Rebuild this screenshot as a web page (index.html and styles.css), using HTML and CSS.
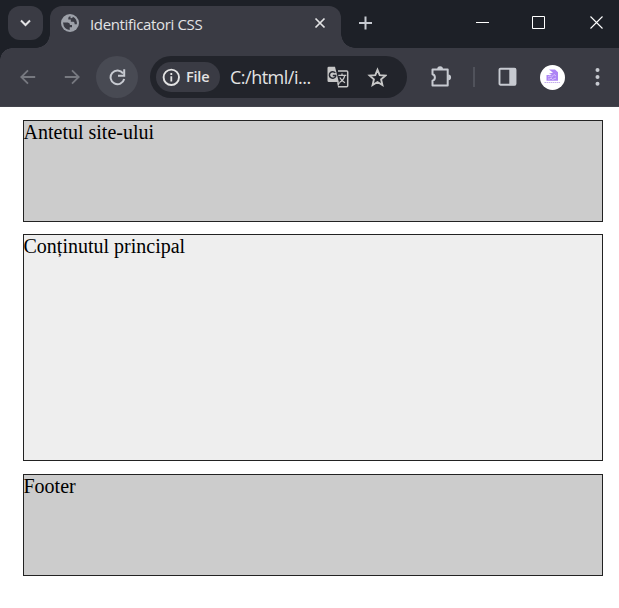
FILE: index.html
```
<!DOCTYPE html>
<html lang="ro">
<head>
<meta charset="utf-8">
<title>Identificatori CSS</title>
<link rel="stylesheet" href="styles.css">
</head>
<body>
<div class="tabstrip">
  <div class="tab-search"><svg width="35" height="34" viewBox="0 0 35 34"><path d="M13 14.500l4.500 4.500 4.500-4.500" fill="none" stroke="#e3e3e5" stroke-width="2"/></svg></div>
  <div class="tab">
    <svg class="globe" width="20" height="20" viewBox="0 0 20 20"><circle cx="10" cy="10" r="9" fill="#9da1a9"/><path d="M3 9.500h4.700q2.300.2 2.300 2.600h2v2.200H9.700v2.700Q3.700 16.500 3 9.500zM10.500 3.200q-2.200 0-2.200 1.800v1.600h2.500v2.200h2.700q1.200.1 1.200 2.400h2.200Q17.200 6 12.900 3.700q0 1.600-2.400 1.600z" fill="#3a3b44"/></svg>
    <span class="tab-title">Identificatori CSS</span>
    <svg class="tab-close" width="12" height="12" viewBox="0 0 12 12"><path d="M1.500 1.500l9 9m0-9l-9 9" stroke="#e3e3e5" stroke-width="1.700"/></svg>
  </div>
  <svg class="new-tab" width="14" height="14" viewBox="0 0 14 14"><path d="M7.500 .5v13M1 7h13" stroke="#c7cad1" stroke-width="2"/></svg>
  <div class="window-controls">
    <svg width="13" height="13" viewBox="0 0 13 13"><path d="M0 6.500h13" stroke="#fff"/></svg>
    <svg width="13" height="13" viewBox="0 0 13 13"><path d="M.5.5h12v12H.5z" fill="none" stroke="#fff"/></svg>
    <svg width="13" height="13" viewBox="0 0 13 13"><path d="M.5.5l12 12m0-12l-12 12" stroke="#fff" stroke-width="1.100"/></svg>
  </div>
</div>
<div class="toolbar">
  <svg class="back" width="16" height="16" viewBox="0 0 16 16"><path d="M15.200 8H2M8 1.300L1.300 8 8 14.700" fill="none" stroke="#777980" stroke-width="1.800"/></svg>
  <svg class="forward" width="16" height="16" viewBox="0 0 16 16"><path d="M.8 8H14M8 1.300L14.700 8 8 14.700" fill="none" stroke="#777980" stroke-width="1.800"/></svg>
  <div class="reload"><svg width="18" height="18" viewBox="0 0 18 18"><path d="M15.100 5.300A6.900 6.900 0 1 0 16.200 11" fill="none" stroke="#c7cad1" stroke-width="2"/><path d="M16.200 1.200v6.500H10" fill="none" stroke="#c7cad1" stroke-width="2"/></svg></div>
  <div class="omnibox">
    <div class="chip">
      <svg width="18" height="18" viewBox="0 0 18 18"><circle cx="9.300" cy="9.300" r="7.700" fill="none" stroke="#e3e3e3" stroke-width="1.900"/><path d="M9.300 8.300v5.200M9.300 5.100v1.800" stroke="#e3e3e3" stroke-width="1.800"/></svg>
      <span>File</span>
    </div>
    <span class="url">C:/html/i...</span>
    <svg class="translate" width="22" height="22" viewBox="0 0 22 22"><path d="M11 5h8.700q1 0 1 1v13.700q0 1-1 1H11" fill="none" stroke="#c7c7c7" stroke-width="1.500"/><path d="M1.800.8H8l3.800 15.300H1.800q-1.300 0-1.300-1.300V2.100Q.5.800 1.800.8zM10 16.200h3.200L11 20.700z" fill="#c7c7c7"/><path d="M8.300 6.900a3.300 3.300 0 1 0 .4 3.400V9.400H5.800" fill="none" stroke="#282a32" stroke-width="1.500"/><path d="M11.300 9.300h8M15 7.500v1.800M17.800 9.300q-1 4.500-5 7M12.800 11.500q1.700 3.300 5.200 5.300" fill="none" stroke="#c7c7c7" stroke-width="1.300"/></svg>
    <svg class="star" width="20" height="20" viewBox="0 0 20 20"><path d="M10.500 2.800l2.200 5.300 5.700.5-4.300 3.800 1.300 5.600-4.900-3-4.900 3 1.300-5.600-4.300-3.800 5.700-.5z" fill="none" stroke="#c7c7c7" stroke-width="1.900"/></svg>
  </div>
  <svg class="extensions" width="22" height="22" viewBox="0 0 22 22"><path d="M2.500 3.500H17.700v15.900H2.500v-4.700a3.400 3.400 0 0 0 0-6.500z" fill="none" stroke="#c7cad1" stroke-width="2" stroke-linejoin="round"/><path d="M7.200 3.200a2.900 2.900 0 0 1 5.800 0zM18.200 8.400a2.900 2.900 0 0 1 0 5.800z" fill="#c7cad1"/></svg>
  <div class="divider"></div>
  <svg class="side-panel" width="19" height="19" viewBox="0 0 19 19"><rect x="1.500" y="1.700" width="16" height="16" rx="1" fill="none" stroke="#c7cad1" stroke-width="1.900"/><path d="M11.300 1.200h6.200v17h-6.200z" fill="#c7cad1"/></svg>
  <svg class="avatar" width="25" height="25" viewBox="0 0 25 25"><circle cx="12.500" cy="12.500" r="12.500" fill="#fff"/><path d="M9 4.500h6l3 2.700v8.500H6.500V10H12l-3-1.500 4-.8z" fill="#ad85f5"/><path d="M8 12l2-1.200 1.500 1.400L14 9.500l2 1.500M8 14h2l1-1 1.500 1.500L16 13" fill="none" stroke="#e1d2ff" stroke-width=".8"/><path d="M4.500 17.500h16" stroke="#b69ae8" stroke-width=".8" stroke-dasharray="1.500 .5"/></svg>
  <svg class="menu" width="5" height="19" viewBox="0 0 5 19"><g fill="#c7cad1"><circle cx="2.500" cy="3" r="2"/><circle cx="2.500" cy="10" r="2"/><circle cx="2.500" cy="16.800" r="2"/></g></svg>
</div>
<div class="page">
  <div class="block">Antetul site-ului</div>
  <div class="block content">Conținutul principal</div>
  <div class="block">Footer</div>
</div>
</body>
</html>
```
FILE: styles.css
```
* {
  box-sizing: border-box;
}
body {
  margin: 0;
  height: 608px;
  overflow: hidden;
  background: #fff;
}
svg {
  display: block;
  flex: none;
}
.tabstrip {
  display: flex;
  height: 48px;
  padding: 6px 16px 0 8px;
  background: #1d2027;
}
.tab-search {
  width: 35px;
  height: 34px;
  border-radius: 12px;
  background: #3a3b44;
}
.tab {
  position: relative;
  display: flex;
  align-items: center;
  width: 291px;
  height: 42px;
  margin-left: 7px;
  padding: 0 15px 8px 10px;
  border-radius: 12px 12px 0 0;
  background: #3a3b44;
}
.tab::before,
.tab::after {
  content: "";
  position: absolute;
  bottom: 0;
  width: 14px;
  height: 14px;
}
.tab::before {
  left: -14px;
  background: radial-gradient(circle at 0 0, transparent 13.5px, #3a3b44 14px);
}
.tab::after {
  right: -14px;
  background: radial-gradient(circle at 100% 0, transparent 13.5px, #3a3b44 14px);
}
.tab-title {
  margin: 2px auto 0 10px;
  color: #e3e3e5;
  font: 15px/20px "Open Sans", sans-serif;
  letter-spacing: -0.35px;
  white-space: nowrap;
}
.new-tab {
  margin: 10px 0 0 17px;
}
.window-controls {
  display: flex;
  gap: 43px;
  margin: 10px 0 0 auto;
}
.window-controls svg:last-child {
  margin-left: 2px;
}
.toolbar {
  display: flex;
  align-items: center;
  height: 59px;
  padding: 0 0 1px 20px;
  border-bottom: 1px solid #43444c;
  background: radial-gradient(circle at 12px 12px, #3a3b44 11.5px, #1d2027 12px) 0 0 / 12px 12px no-repeat, #3a3b44;
}
.forward {
  margin-left: 28px;
}
.reload {
  display: grid;
  place-items: center;
  width: 42px;
  height: 42px;
  margin-left: 16px;
  border-radius: 50%;
  background: #484a53;
}
.omnibox {
  display: flex;
  align-items: center;
  width: 257px;
  height: 42px;
  margin-left: 12px;
  padding-left: 6px;
  border-radius: 21px;
  background: #22242b;
}
.chip {
  display: flex;
  align-items: center;
  width: 64px;
  height: 30px;
  padding-left: 6px;
  border-radius: 15px;
  background: #3a3b44;
}
.chip span {
  margin-left: 6px;
  color: #e3e3e3;
  font: 600 14.5px/20px "Open Sans", sans-serif;
  letter-spacing: -0.2px;
}
.url {
  width: 87px;
  margin-left: 10px;
  color: #e3e3e3;
  font: 18px/24px "Open Sans", sans-serif;
  letter-spacing: -0.5px;
  white-space: nowrap;
}
.translate {
  margin-left: 10px;
}
.star {
  margin-left: 18px;
}
.extensions {
  margin-left: 23px;
}
.divider {
  width: 2px;
  height: 20px;
  margin-left: 21px;
  background: #50525b;
}
.side-panel {
  margin-left: 23px;
}
.avatar {
  margin: 1px 0 0 23px;
}
.menu {
  margin-left: 30px;
}
.page {
  display: grid;
  gap: 12px;
  padding: 13px 16px 0 23px;
  grid-template-rows: 102px 228px 102px;
}
.block {
  border: 1px solid #222;
  background: #ccc;
  color: #000;
  font: 20px/23px "Liberation Serif", serif;
  text-indent: -0.5px;
}
.content {
  height: 227px;
  background: #eee;
}
```
